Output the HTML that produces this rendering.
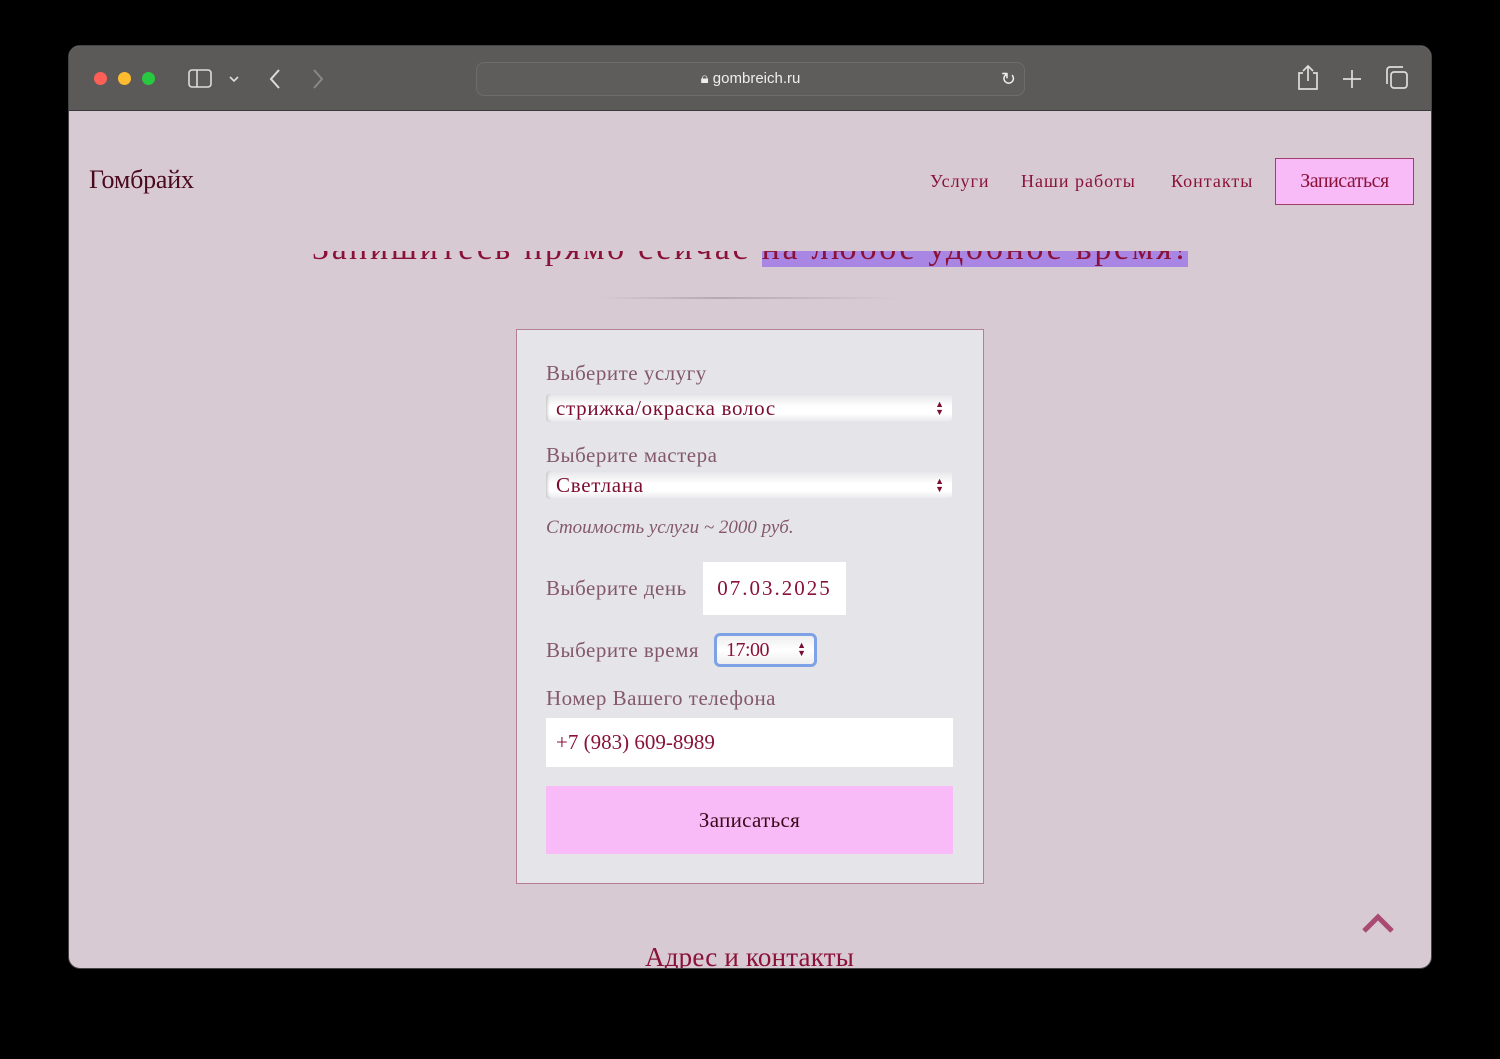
<!DOCTYPE html>
<html><head><meta charset="utf-8"><style>
*{box-sizing:border-box;margin:0;padding:0}
body{width:1500px;height:1059px;background:#000;position:relative;overflow:hidden;font-family:"Liberation Serif","DejaVu Serif",serif}
.win{position:absolute;left:68px;top:45px;width:1364px;height:924px;border-radius:12px;overflow:hidden;background:#d8cad2;border:1px solid #444}
.bar{position:absolute;left:0;top:0;width:100%;height:65px;background:#5c5a59;border-bottom:1px solid #3a3a3a}
.dot{position:absolute;top:26px;width:13px;height:13px;border-radius:50%}
.url{position:absolute;left:407px;top:16px;width:549px;height:34px;border:1px solid #6e6c6b;border-radius:8px;background:#5f5d5c;color:#eee;font:500 15px "Liberation Sans",sans-serif;text-align:center;line-height:32px}
.a{position:absolute;white-space:nowrap}
.red{color:#8a1238}
.lab{color:#84586c;font-size:21px;letter-spacing:.5px}
.sel{position:absolute;left:29px;width:406px;height:28px;background:linear-gradient(#e6e6ea,#fff 45%,#fff 70%,#e8e8ec);border-radius:4px;box-shadow:inset 3px 0 3px -2px #bbb;color:#7a0d30;font-size:21px;letter-spacing:.7px;line-height:28px;padding-left:10px}
.arr{position:absolute;right:8px;top:6px;font-size:9px;line-height:8px;color:#7a0d30;letter-spacing:0}
</style></head><body>
<div class="win">
 <div class="bar">
  <div class="dot" style="left:25px;background:#fe5f57"></div>
  <div class="dot" style="left:49px;background:#febc2e"></div>
  <div class="dot" style="left:73px;background:#28c840"></div>
  <svg class="a" style="left:118px;top:22px" width="60" height="22" fill="none" stroke="#ddd" stroke-width="1.6"><rect x="2" y="2" width="22" height="17" rx="3"/><line x1="10" y1="2" x2="10" y2="19"/><path d="M43 9l4 4 4-4"/></svg>
  <svg class="a" style="left:195px;top:21px" width="70" height="24" fill="none" stroke="#ddd" stroke-width="2"><path d="M15 3l-8 9 8 9"/><path d="M50 3l8 9-8 9" stroke="#888"/></svg>
  <div class="url">🔒︎ gombreich.ru<span style="position:absolute;right:8px;top:0;font-size:18px">↻</span></div>
  <svg class="a" style="left:1225px;top:18px" width="120" height="30" fill="none" stroke="#ddd" stroke-width="1.7"><path d="M9 9H5v16h18V9h-4M14 2v15M9 7l5-5 5 5"/><path d="M58 6v18M49 15h18"/><rect x="97" y="8" width="16" height="16" rx="3"/><path d="M93 20V6a3 3 0 0 1 3-3h13"/></svg>
 </div>
 <div class="a red" style="left:243px;top:183px;font-size:34px;letter-spacing:2.7px;line-height:40px">Запишитесь прямо сейчас <span style="background:#aa86e4">на любое удобное время!</span></div>
 <div class="a" style="left:0;top:65px;width:1364px;height:140px;background:#d8cad2"></div>
 <div class="a" style="left:20px;top:119px;font-size:26px;color:#4a0a1e;letter-spacing:-.2px">Гомбрайх</div>
 <div class="a red" style="left:861px;top:125px;font-size:18px;letter-spacing:1px">Услуги</div>
 <div class="a red" style="left:952px;top:125px;font-size:18px;letter-spacing:1px">Наши работы</div>
 <div class="a red" style="left:1102px;top:125px;font-size:18px;letter-spacing:1px">Контакты</div>
 <div class="a red" style="left:1206px;top:112px;width:139px;height:47px;background:#f8bbf8;border:1px solid #a0406a;text-align:center;line-height:45px;font-size:20px;letter-spacing:-.5px">Записаться</div>
 <div class="a" style="left:530px;top:251px;width:300px;height:2px;background:linear-gradient(90deg,transparent,#b8a8b0 40%,transparent)"></div>
 <div class="a" style="left:447px;top:283px;width:468px;height:555px;background:#e5e5e9;border:1px solid #b47f95">
  <div class="a lab" style="left:29px;top:31px">Выберите услугу</div>
  <div class="sel" style="top:64px">стрижка/окраска волос<div class="arr">▲<br>▼</div></div>
  <div class="a lab" style="left:29px;top:113px">Выберите мастера</div>
  <div class="sel" style="top:141px">Светлана<div class="arr">▲<br>▼</div></div>
  <div class="a lab" style="left:29px;top:187px;font-style:italic;font-size:19px;letter-spacing:0">Стоимость услуги ~ 2000 руб.</div>
  <div class="a lab" style="left:29px;top:246px">Выберите день</div>
  <div class="a red" style="left:186px;top:232px;width:143px;height:53px;background:#fff;font-size:21px;letter-spacing:2px;line-height:53px;text-align:center">07.03.2025</div>
  <div class="a lab" style="left:29px;top:308px">Выберите время</div>
  <div class="a red" style="left:197px;top:303px;width:103px;height:34px;border:3px solid #7fa2e6;border-radius:6px;background:linear-gradient(#eee,#fff 50%,#eee);font-size:20px;line-height:28px;padding-left:9px;letter-spacing:-.5px">17:00<div class="arr" style="top:5px">▲<br>▼</div></div>
  <div class="a lab" style="left:29px;top:356px">Номер Вашего телефона</div>
  <div class="a red" style="left:29px;top:388px;width:407px;height:49px;background:#fff;font-size:21px;line-height:49px;padding-left:10px;letter-spacing:0">+7 (983) 609-8989</div>
  <div class="a" style="left:29px;top:456px;width:407px;height:68px;background:#f8bbf8;color:#3a0a1a;font-size:21px;letter-spacing:.3px;line-height:68px;text-align:center">Записаться</div>
 </div>
 <svg class="a" style="left:1292px;top:866px" width="34" height="22"><path d="M3 19L17 5l14 14" fill="none" stroke="#a84a72" stroke-width="5"/></svg>
 <div class="a red" style="left:576px;top:896px;font-size:27px;letter-spacing:.2px">Адрес и контакты</div>
</div>
</body></html>
